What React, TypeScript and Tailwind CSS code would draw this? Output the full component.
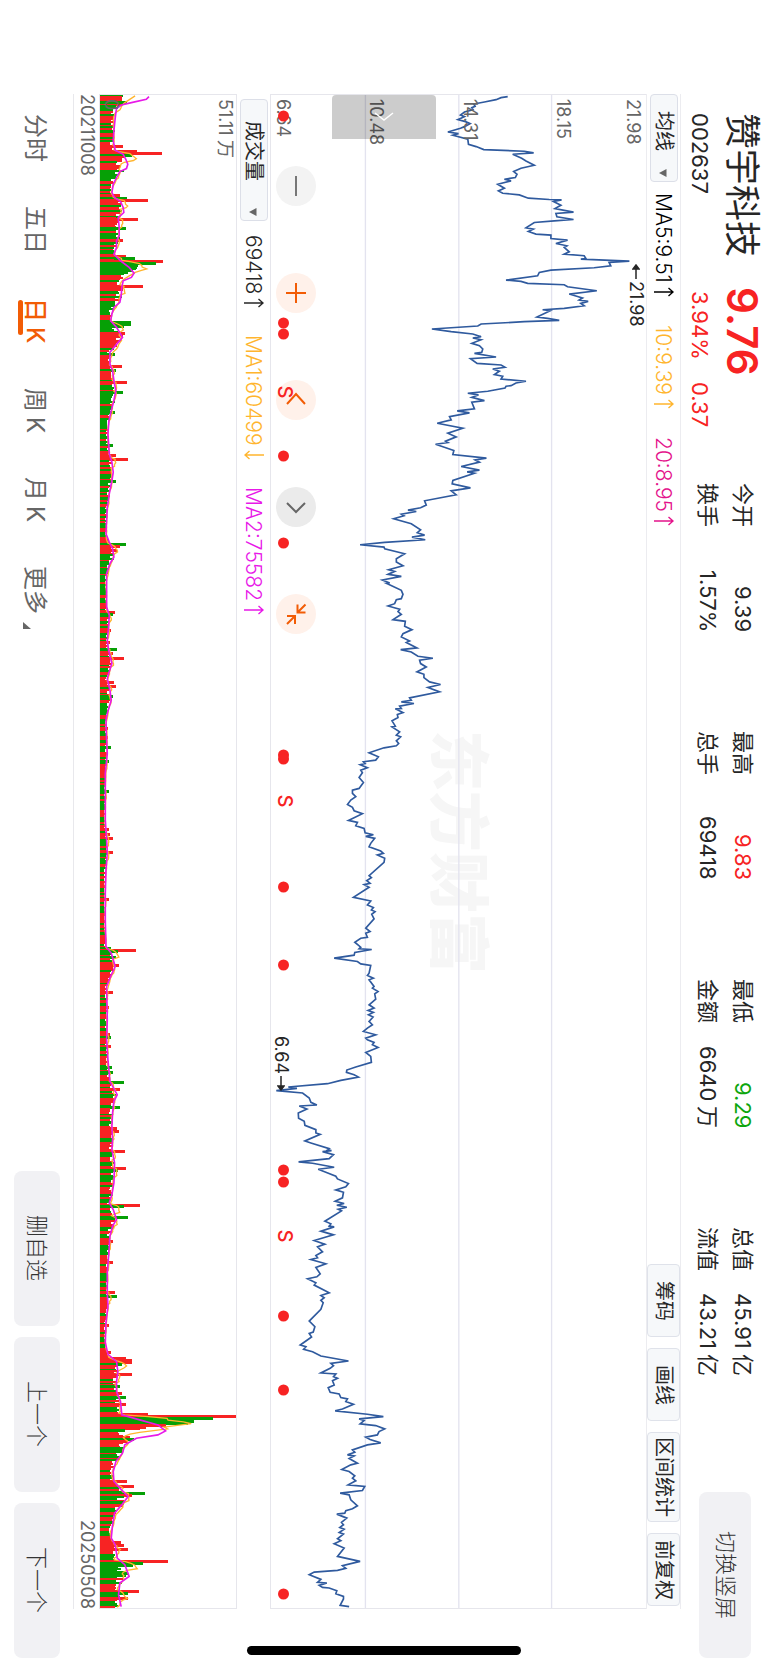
import type { ReactNode } from "react";
import clsx from "clsx";

// The page is a landscape screen turned a quarter clockwise: the inline axis
// runs down the window and the block axis runs from right to left.

type Trace = { at: [number, number]; points: string };

// Chart units are a third of a pixel.
const PRICE_W = 1128;
const CHART_H = 4545;
const VOLUME_W = 411;
const DAYS = 866;
const PITCH = CHART_H / DAYS;

const priceTraces: Trace[] = [
  {
    at: [342, -42],
    points:
      "370,47 350,50 335,56 300,63 268,69 272,76 262,80 266,86 240,93 228,102 240,107 220,116 243,122 257,128 240,137 228,142 190,153 222,158 205,163 250,175 252,190 275,197 298,206 420,211 448,216 385,220 412,232 425,240 450,253 410,262 388,272 398,280 393,290 360,295 380,300 340,310 360,322 342,330 355,337 405,342 432,352 495,356 532,357 508,362 530,373 512,383 568,394 515,398 518,408 568,416 510,420 450,425 425,441 447,445 432,452 455,460 500,463 500,473 550,478 515,488 548,495 540,500 555,513 540,520 600,525 605,533 590,535 680,539 736,541 675,545 680,555 630,561 500,568 465,575 460,585 365,598 410,602 430,608 540,612 550,618 638,630 555,640 595,652 585,658 612,662 590,668 600,675 540,683 475,687 498,690 458,709 490,713 525,719 420,723 290,730 280,736 142,745 200,753 265,760 290,768 265,772 290,777 262,788 285,795 295,805 292,815 270,818 335,829 258,834 278,848 350,853 362,860 325,865 345,872 330,882 355,887 350,895 425,902 395,907 380,915 365,917 362,922 310,932 250,938 282,943 262,950",
  },
  {
    at: [342, 918],
    points:
      "300,0 262,5 270,25 218,31 255,37 195,48 200,58 158,68 235,83 190,98 215,109 183,122 190,126 153,131 208,150 205,162 306,173 272,178 285,185 230,198 285,209 248,214 270,218 205,240 203,250 258,262 200,271 215,283 120,301 125,314 108,322 70,329 95,333 50,341 58,346 27,355 80,370 108,388 98,397 120,404 82,410 122,418 0,426 -74,433 -2,440 0,445 60,460 35,475 35,485 55,496 12,508 30,513 10,522 50,528 -7,539 15,548 5,549 50,570 55,582 50,595 35,598 30,610 10,617 45,627 40,634 50,642 25,658 62,663 60,678 82,688 55,700 50,710 75,722 65,727 97,743 48,748 80,755 100,768 145,774 105,780 108,790 125,800 97,815 118,822 118,832 135,845 168,853 130,862 165,875 75,893 80,900 50,905 88,910 45,918 50,925 32,926 55,937 38,943 40,952",
  },
  {
    at: [-810, 1878],
    points:
      "1174,2 1184,18 1174,20 1197,35 1187,45 1200,50 1187,62 1194,70 1187,77 1150,83 1105,98 1133,110 1125,120 1088,125 1093,130 1078,134 1100,143 1080,150 1085,158 1075,172 1088,187 1075,205 1055,210 1055,220 1065,230 1050,240 1040,253 1055,262 1060,272 1085,281 1043,301 1070,307 1065,317 1090,325 1093,338 1118,344 1095,349 1122,355 1110,370 1105,380 1140,393 1148,400 1130,405 1152,415 1150,427 1105,467 1112,473 1098,482 1108,490 1090,494 1105,502 1058,532 1110,543 1100,555 1118,563 1112,570 1123,575 1113,583 1120,597 1095,625 1108,635 1095,640 1100,652 1080,655 1062,667 1080,682 1075,687 1113,689 1062,698 1060,706 1000,715 1070,725 1080,732 1110,737 1105,760 1100,767 1118,775 1105,780 1120,800 1115,805 1132,815 1122,822 1125,838 1105,855 1120,865 1102,872 1118,878 1103,885 1117,892 1105,905 1115,915 1100,925 1088,935 1125,945 1095,955",
  },
  {
    at: [-810, 2838],
    points:
      "1100,0 1120,8 1115,15 1132,23 1095,38 1110,50 1112,68 1065,82 1038,91 1037,98 1060,105 1073,112 1020,122 980,132 862,142 888,146 826,153 905,160 925,175 930,188 948,196 895,199 918,208 892,220 893,236 910,245 912,257 945,270 945,280 958,284 912,304 930,310 985,327 980,331 992,333 965,336 998,345 985,357 893,367 935,371 1000,383 952,389 975,398 1005,410 1010,418 1043,432 1035,442 1005,451 1028,458 1025,475 1003,485 1030,492 1008,497 1038,503 1012,509 1022,514 972,545 990,553 985,560 1000,562 960,575 998,586 940,603 972,614 950,622 965,637 945,648 950,655 930,660 975,673 945,684 958,703 948,712 920,718 945,730 940,737 985,760 960,768 970,775 960,783 967,790 960,810 925,845 942,862 937,878 925,882 932,893 898,917 915,922 908,930 935,937 960,950",
  },
  {
    at: [-810, 3735],
    points:
      "1043,68 990,75 998,82 988,90 960,104 1005,107 998,115 1010,120 995,127 1000,140 982,148 988,162 1015,167 1020,178 1040,182 1035,190 1058,198 1025,212 1003,218 1100,228 1148,235 1075,242 1090,247 1078,257 1125,262 1152,272 1135,280 1130,290 1095,297 1108,304 1140,314 1100,320 1055,335 1062,342 1040,350 1060,353 1045,361 1070,375 1050,380 1023,394 1045,400 1062,413 1055,420 1065,428 1042,440 1092,445 1085,457 1018,465 1045,470 1050,485 1070,503 1055,512 1035,518 1032,525 1008,528 1038,540 1022,553 1028,560 1017,568 1030,573 1015,583 1028,588 1010,602 1020,608 1000,617 1030,630 1010,655 1078,670 1025,683 1035,691 1010,697 940,702 925,710 960,724 950,733 978,735 955,742 965,748 985,750 1008,758 1005,767 1028,775 1028,783 1018,802 1045,806",
  },
];

// "position:length" along the time axis
const trendTraces: [number, string][] = [
  [-42, "47:148 55:140 65:95 72:65 82:50 95:48 120:45 150:42 180:40 208:46 220:70 235:78 250:84 263:80 272:60 290:50 310:40 335:36 350:44 362:62 380:70 395:72 410:55 440:58 465:58 480:50 500:50 520:42 540:62 560:88 577:103 590:95 600:70 620:66 645:64 665:60 680:42 700:36 720:32 740:50 770:68 785:55 815:30 850:30 870:38 900:42 930:48 950:44"],
  [918, "0:42 30:34 60:27 100:24 160:28 185:36 215:40 240:36 280:28 320:22 400:18 425:28 445:38 470:42 490:30 520:20 620:20 645:28 680:26 720:22 750:26 790:36 820:26 835:22 870:30 900:34 940:22"],
  [1878, "0:18 60:20 100:22 160:16 300:16 360:20 400:22 450:18 520:16 600:16 680:18 700:34 740:46 770:32 800:20 900:22"],
  [2838, "0:20 60:24 125:30 165:52 185:42 220:38 260:36 300:38 330:36 370:44 430:42 465:36 490:28 510:40 540:50 560:38 590:30 650:26 700:22 760:22 800:24 850:18 910:16 945:24"],
  [3735, "70:50 100:54 130:50 160:50 190:62 230:66 245:120 260:175 278:198 290:175 300:110 320:75 345:68 370:48 400:40 430:42 450:60 475:85 500:66 525:44 560:38 600:34 620:46 660:52 680:75 715:88 735:60 770:56 806:64"],
];

// same, with r(ise) or f(all)
const spikeTraces: [number, string][] = [
  [-42, "50:66:r 56:66:r 68:82:f 197:68:r 212:112:r 218:188:r 224:98:f 343:60:r 352:82:f 360:146:r 417:116:r 443:80:f 480:68:r 526:80:r 532:106:f 543:190:r 549:168:f 555:115:f 560:112:f 565:110:f 571:100:f 577:86:f 617:130:r 627:70:r 725:94:f 731:94:f 740:74:f 757:76:r 762:70:r 770:60:r 820:46:f 857:66:r 868:48:f 904:82:r 936:70:f"],
  [918, "33:46:f 132:38:f 168:48:r 174:86:r 243:48:f 431:80:f 441:60:r 447:50:r 636:46:r 641:38:f 688:34:r 725:30:r 750:50:f 757:38:r 776:72:r 848:42:r 856:48:r 888:40:f"],
  [1878, "26:24:r 52:24:r 84:32:f 126:28:f 213:26:f 330:28:r 347:30:r 356:40:r 398:40:r 541:28:r 686:34:f 691:108:r 697:54:f 713:48:f 738:58:r 817:40:r 864:28:r 945:30:r 951:34:f"],
  [2838, "18:34:r 83:36:f 98:40:f 129:74:f 150:60:r 202:60:f 265:50:r 275:58:r 333:76:r 385:80:r 390:54:f 459:40:r 495:120:r 501:74:f 532:86:f 562:42:r 610:40:r 670:40:r 762:46:r 768:52:f 862:26:r 940:32:r"],
  [3735, "60:80:r 65:97:r 71:97:r 77:66:f 111:98:r 148:60:f 168:66:r 180:80:f 201:78:r 231:146:r 237:410:r 243:340:f 249:285:f 255:265:f 261:200:r 267:140:r 273:120:r 279:75:f 297:90:r 303:104:f 309:85:r 315:70:r 431:82:r 447:103:r 467:136:f 473:98:r 505:70:r 612:62:r 624:72:r 635:85:r 671:205:r 677:130:f 683:100:f 710:84:f 715:80:f 760:118:r 766:84:f 782:84:r"],
];

const pricePoints = priceTraces
  .flatMap(({ at, points }) =>
    points.split(" ").map((pair) => {
      const [x, y] = pair.split(",").map(Number);
      return `${x + at[0]},${y + at[1]}`;
    }),
  )
  .join(" ");

const trend = trendTraces.flatMap(([offset, items]) =>
  items.split(" ").map((item) => {
    const [at, size] = item.split(":").map(Number);
    return { at: at + offset, size };
  }),
);

function trendAt(pos: number) {
  const next = trend.findIndex((p) => p.at > pos);
  if (next === -1) return trend[trend.length - 1].size;
  if (next === 0) return trend[0].size;
  const a = trend[next - 1];
  const b = trend[next];
  return a.size + ((b.size - a.size) * (pos - a.at)) / (b.at - a.at);
}

type Bar = { size: number; rise: boolean; spike: boolean };

function buildBars(): Bar[] {
  let seed = 2637;
  const random = () => {
    seed = (seed * 16807) % 2147483647;
    return seed / 2147483647;
  };
  let rise = true;
  const bars: Bar[] = [];
  for (let i = 0; i < DAYS; i++) {
    if (random() < 0.45) rise = !rise;
    const size = Math.min(trendAt(i * PITCH), 70) * (0.7 + random() * 0.36);
    bars.push({ size, rise, spike: false });
  }
  for (const [offset, items] of spikeTraces) {
    for (const item of items.split(" ")) {
      const [at, size, kind] = item.split(":");
      const i = Math.round((Number(at) + offset) / PITCH - 0.5);
      bars[Math.max(0, i)] = { size: Number(size), rise: kind === "r", spike: true };
    }
  }
  return bars;
}

const bars = buildBars();

const shortAverage = bars
  .map((_, i) => {
    const span = bars.slice(Math.max(0, i - 4), i + 1);
    const mean = span.reduce((sum, b) => sum + b.size, 0) / span.length;
    const size = i < 8 ? Math.max(mean, 104 - i * 8) : mean;
    return `${size + 2},${(i + 0.5) * PITCH}`;
  })
  .join(" ");

const longAverage = trend.map((p) => `${p.size},${p.at}`).join(" ");

const stats = [
  [
    { label: "今开", value: "9.39" },
    { label: "换手", value: "1.57%" },
  ],
  [
    { label: "最高", value: "9.83", tone: "text-[#f72323]" },
    { label: "总手", value: "69418" },
  ],
  [
    { label: "最低", value: "9.29", tone: "text-[#0da60d]" },
    { label: "金额", value: "6640万" },
  ],
  [
    { label: "总值", value: "45.91亿" },
    { label: "流值", value: "43.21亿" },
  ],
];

const dots = [21, 228, 239, 361, 448, 660, 664, 792, 870, 1075, 1087, 1221, 1295, 1499];
const splits = [297, 706, 1141];
const periods = ["分时", "五日", "日K", "周K", "月K", "更多"];

export default function App() {
  return (
    <div className="relative flex h-screen w-full flex-col overflow-hidden bg-white font-['Inter','Noto_Sans_CJK_SC',sans-serif] text-[#262626] [text-autospace:normal] [text-orientation:sideways] [writing-mode:vertical-rl]">
      <Header />
      <PriceLegend />
      <PriceChart />
      <VolumeLegend />
      <VolumeChart />
      <div className="mt-[94px] mb-[60px] flex w-[26px] justify-between border-l border-[#e8e8ec] text-[18px] leading-[24px] text-[#666]">
        <span>20211008</span>
        <span>20250508</span>
      </div>
      <Footer />
      <div className="absolute bottom-[14px] left-1/2 h-[9px] w-[274px] -translate-x-1/2 rounded-full bg-black" />
    </div>
  );
}

function Header() {
  return (
    <header className="flex w-[87px] justify-between pt-[113px] pb-[11px]">
      <div className="flex">
        <div className="grid h-[370px] grid-cols-[174px_auto] content-start pr-[2px]">
          <h1 className="text-[36px] leading-[48px]">赞宇科技</h1>
          <strong className="text-[42px] leading-[48px] font-semibold text-[#f72323]">9.76</strong>
          <span className="text-[22px] leading-[36px]">002637</span>
          <div className="flex gap-[22px] pt-[4px] text-[22px] leading-[36px] text-[#f72323]">
            <span>3.94%</span>
            <span>0.37</span>
          </div>
        </div>
        <div className="flex gap-[99px] pr-[8px] text-[22px] leading-[35px]">
          {stats.map((column) => (
            <dl key={column[0].label} className="h-[149px]">
              {column.map(({ label, value, tone }) => (
                <div key={label} className="flex justify-between">
                  <dt>{label}</dt>
                  <dd className={tone}>
                    <Amount value={value} />
                  </dd>
                </div>
              ))}
            </dl>
          ))}
        </div>
      </div>
      <button
        type="button"
        className="mr-[17px] flex h-[166px] w-[52px] items-center justify-center rounded-lg bg-[#f1f1f4] text-[22px] font-light text-[#333]"
      >
        切换竖屏
      </button>
    </header>
  );
}

// A small gap sets the unit apart from the digits.
function Amount({ value }: { value: string }) {
  const unit = value.match(/[万亿]$/)?.[0];
  if (!unit) return value;
  return (
    <>
      {value.slice(0, -1)}
      <span className="pt-[2px]">{unit}</span>
    </>
  );
}

function PriceLegend() {
  return (
    <div className="mt-[94px] mb-[60px] flex w-[35px] items-center border-r border-l border-[#ececf0] text-[20px]">
      <Picker label="均线" className="h-[88px] pt-[16px]" />
      <div className="flex gap-[28px] pt-[11px]">
        <Reading text="MA5:9.51" up tone="text-black" />
        <Reading text="10:9.39" up tone="text-[#ffb52e]" />
        <Reading text="20:8.95" up tone="text-[#e4138b]" />
      </div>
      <div className="mt-auto flex gap-[11px] self-stretch pb-[3px]">
        {["筹码", "画线", "区间统计", "前复权"].map((name) => (
          <button
            key={name}
            type="button"
            className="flex min-h-[73px] items-center justify-center rounded border border-[#dfe2ea] bg-[#f6f8fa] pt-[4px] pb-[4px] leading-none"
          >
            {name}
          </button>
        ))}
      </div>
    </div>
  );
}

function VolumeLegend() {
  return (
    <div className="mt-[94px] mb-[60px] flex w-[33px] items-center pt-[5px] text-[20px]">
      <Picker label="成交量" className="h-[122px] pt-[21px]" />
      <div className="flex gap-[27px] pt-[14px]">
        <Reading text="69418" up tone="text-[#262626]" />
        <Reading text="MA1:60499" tone="text-[#ffb52e]" />
        <Reading text="MA2:75582" up tone="text-[#e819e8]" />
      </div>
    </div>
  );
}

function Picker({ label, className }: { label: string; className: string }) {
  return (
    <div className="relative">
      <select
        aria-label={label}
        className={clsx(
          "w-[28px] appearance-none rounded border border-[#dcdfe8] bg-[#f6f8fa] leading-[26px]",
          className,
        )}
      >
        <option>{label}</option>
      </select>
      <svg
        viewBox="0 0 8 8"
        className="pointer-events-none absolute bottom-[5px] left-[10px] size-2 fill-[#666]"
      >
        <path d="M7.5 0v8L0 4z" />
      </svg>
    </div>
  );
}

function Reading({ text, up, tone }: { text: string; up?: boolean; tone: string }) {
  return (
    <span className={clsx("flex items-center gap-[4px] text-[21px] font-light", tone)}>
      {text}
      <svg viewBox="0 0 20 10" className="h-[10px] w-[20px] fill-none stroke-current stroke-[1.4]">
        <path d={up ? "M0 5h19M14.500 1l4.500 4l-4.500 4" : "M20 5H1M5.500 1L1 5l4.500 4"} />
      </svg>
    </span>
  );
}

function PriceChart() {
  return (
    <section className="relative mt-[94px] mb-[60px] min-w-0 flex-1 border-t border-b border-l border-[#e6e6ec] text-[18px] leading-none">
      <span className="absolute top-1/2 left-[156px] -translate-y-[122px] text-[61px] font-black text-[#f6f6f6]">
        东方财富
      </span>
      <svg
        viewBox={`0 0 ${PRICE_W} ${CHART_H}`}
        preserveAspectRatio="none"
        className="absolute inset-0 h-full w-full fill-none"
      >
        <path d={`M284 0V${CHART_H}M565 0V${CHART_H}M844 0V${CHART_H}`} stroke="#e3e3ef" strokeWidth="4" />
        <polyline points={pricePoints} stroke="#2f5a9e" strokeWidth="5" strokeLinejoin="miter" />
      </svg>

      <div className="text-[#666]">
        <span className="absolute top-[4px] left-[353px]">21.98</span>
        <span className="absolute top-[4px] left-[283px]">18.15</span>
        <span className="absolute top-[4px] left-[190px]">14.31</span>
        <span className="absolute top-[4px] left-[96px]">10.48</span>
        <span className="absolute top-[4px] left-[3px]">6.64</span>
      </div>

      <span className="absolute top-[169px] left-[356px] flex items-center gap-[2px]">
        <Pointer d="M4 15V1M1 5l3-4 3 4z" />
        21.98
      </span>
      <span className="absolute top-[941px] left-[1px] flex items-center gap-[2px]">
        6.64
        <Pointer d="M4 0v14M1 10l3 4 3-4z" />
      </span>

      <button
        type="button"
        aria-label="展开"
        className="absolute top-0 left-[61px] flex h-[44px] w-[104px] items-center justify-center rounded-t bg-black/20"
      >
        <svg viewBox="0 0 24 24" className="size-6 fill-none stroke-white stroke-[1.5]">
          <path d="M3 8l9 7 9-7" />
        </svg>
      </button>

      <div className="absolute top-[71px] left-[5px] flex gap-[67px]">
        <RoundButton label="缩小" tone="bg-[#f3f3f3] stroke-[#777]">
          <path d="M20 10v20" />
        </RoundButton>
        <RoundButton label="放大" tone="bg-[#fff1ea] stroke-[#f25c05]">
          <path d="M20 10v20M10 20h20" />
        </RoundButton>
        <RoundButton label="向左" tone="bg-[#fff1ea] stroke-[#f25c05]">
          <path d="M11 24l9-10 9 10" />
        </RoundButton>
        <RoundButton label="向右" tone="bg-[#ebebeb] stroke-[#666]">
          <path d="M11 16l9 9 9-9" />
        </RoundButton>
        <RoundButton label="收起" tone="bg-[#fff1ea] stroke-[#f25c05]">
          <path d="M21.500 10.500v8h8M21.500 18.500l8-8M11 22h8v8M19 22l-8 8" />
        </RoundButton>
      </div>

      {dots.map((top) => (
        <i
          key={top}
          className="absolute left-[7px] size-[11px] -translate-y-1/2 rounded-full bg-[#f72323]"
          style={{ top }}
        />
      ))}
      {splits.map((top) => (
        <span
          key={top}
          className="absolute left-[4px] -translate-y-1/2 text-[20px] font-medium text-[#f72323]"
          style={{ top }}
        >
          S
        </span>
      ))}
    </section>
  );
}

function Pointer({ d }: { d: string }) {
  return (
    <svg viewBox="0 0 8 15" className="h-[15px] w-2 fill-current stroke-current stroke-[1.5]">
      <path d={d} />
    </svg>
  );
}

function RoundButton({
  label,
  tone,
  children,
}: {
  label: string;
  tone: string;
  children: ReactNode;
}) {
  return (
    <button type="button" aria-label={label} className={clsx("size-10 rounded-full", tone)}>
      <svg viewBox="0 0 40 40" className="size-10 fill-none stroke-2">
        {children}
      </svg>
    </button>
  );
}

function VolumeChart() {
  return (
    <section className="relative mt-[94px] mb-[60px] w-[138px] border border-[#e6e6ec] text-[18px] leading-none text-[#666]">
      <svg
        viewBox={`0 0 ${VOLUME_W} ${CHART_H}`}
        preserveAspectRatio="none"
        className="absolute inset-0 h-full w-full fill-none"
      >
        <g shapeRendering="crispEdges">
          {bars.map((bar, i) => (
            <rect
              key={i}
              y={i * PITCH - (bar.spike ? 2 : 0)}
              width={bar.size}
              height={bar.spike ? 9 : 6}
              fill={bar.rise ? "#f72323" : "#06a006"}
            />
          ))}
        </g>
        <polyline points={shortAverage} stroke="#ffb52e" strokeWidth="4" />
        <polyline points={longAverage} stroke="#e819e8" strokeWidth="5" />
      </svg>
      <span className="absolute top-[4px] right-[2px]">
        <Amount value="51.11万" />
      </span>
      <span className="absolute top-[4px] left-[2px]">0</span>
    </section>
  );
}

function Footer() {
  return (
    <footer className="flex w-[73px] items-center justify-between pt-[114px] pb-[11px]">
      <nav className="flex gap-[44px] pr-[3px] text-[24px] leading-[38px] text-[#666]">
        {periods.map((name) => (
          <a
            key={name}
            href="#"
            className={clsx(
              "relative flex",
              name.endsWith("K") && "gap-[5px]",
              name === "日K" && "font-medium text-[#f25c05]",
            )}
          >
            {name.endsWith("K") ? (
              <>
                <span>{name[0]}</span>
                <span>K</span>
              </>
            ) : (
              name
            )}
            {name === "日K" && (
              <span className="absolute top-[2px] left-[2px] h-[35px] w-[5px] rounded-full bg-[#f25c05]" />
            )}
            {name === "更多" && (
              <svg viewBox="0 0 8 7" className="mt-[8px] mr-auto ml-[7px] h-[7px] w-2 self-end fill-[#666]">
                <path d="M0 0l8 7H0z" />
              </svg>
            )}
          </a>
        ))}
      </nav>
      <div className="flex gap-[11px] text-[22px]">
        {["删自选", "上一个", "下一个"].map((name) => (
          <button
            key={name}
            type="button"
            className="flex h-[155px] w-[46px] items-center justify-center rounded-lg bg-[#f1f1f4] font-light text-[#333]"
          >
            {name}
          </button>
        ))}
      </div>
    </footer>
  );
}
